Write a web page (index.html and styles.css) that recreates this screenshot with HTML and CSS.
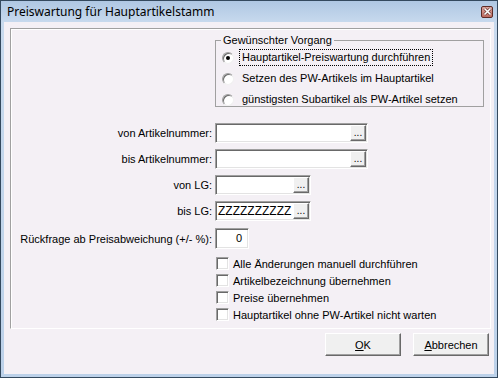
FILE: index.html
```html
<!DOCTYPE html>
<html>
<head>
    <link rel="stylesheet" href="styles.css">
</head>
<body>
    <div class="window">
        <div class="titlebar">
            <span class="title">Preiswartung für Hauptartikelstamm</span>
            <span class="close">
                <svg width="9" height="9" viewBox="0 0 9 9">
                    <path d="M1.5 1.5 L7.5 7.5 M7.5 1.5 L1.5 7.5" stroke="#6d3a34" stroke-width="3"/>
                    <path d="M1.5 1.5 L7.5 7.5 M7.5 1.5 L1.5 7.5" stroke="#ffffff" stroke-width="1.6"/>
                </svg>
            </span>
        </div>
        <div class="client">
            <div class="panel">
                <fieldset class="group">
                    <legend>Gewünschter Vorgang</legend>
                    <div class="radio-row"><span class="radio checked"></span><span class="opt focus">Hauptartikel-Preiswartung durchführen</span></div>
                    <div class="radio-row"><span class="radio"></span><span class="opt">Setzen des PW-Artikels im Hauptartikel</span></div>
                    <div class="radio-row"><span class="radio"></span><span class="opt">günstigsten Subartikel als PW-Artikel setzen</span></div>
                </fieldset>

                <div class="fields">
                    <div class="row">
                        <span class="lbl">von Artikelnummer:</span>
                        <div class="edit wide"><span class="val"></span><span class="dots">...</span></div>
                    </div>
                    <div class="row">
                        <span class="lbl">bis Artikelnummer:</span>
                        <div class="edit wide"><span class="val"></span><span class="dots">...</span></div>
                    </div>
                    <div class="row">
                        <span class="lbl">von LG:</span>
                        <div class="edit narrow"><span class="val"></span><span class="dots">...</span></div>
                    </div>
                    <div class="row">
                        <span class="lbl">bis LG:</span>
                        <div class="edit narrow"><span class="val">ZZZZZZZZZZ</span><span class="dots">...</span></div>
                    </div>
                    <div class="row row-gap">
                        <span class="lbl">Rückfrage ab Preisabweichung (+/- %):</span>
                        <div class="edit tiny"><span class="val num">0</span></div>
                    </div>
                </div>

                <div class="checks">
                    <div class="check-row"><span class="check"></span><span>Alle Änderungen manuell durchführen</span></div>
                    <div class="check-row"><span class="check"></span><span>Artikelbezeichnung übernehmen</span></div>
                    <div class="check-row"><span class="check"></span><span>Preise übernehmen</span></div>
                    <div class="check-row"><span class="check"></span><span>Hauptartikel ohne PW-Artikel nicht warten</span></div>
                </div>
            </div>

            <div class="buttons">
                <button class="btn"><u>O</u>K</button>
                <button class="btn"><u>A</u>bbrechen</button>
            </div>
        </div>
    </div>
</body>
</html>
```

FILE: styles.css
```css
/* General */
body {
    margin: 0;
    font-family: 'Liberation Sans', Arial, sans-serif;
    font-size: 11px;
    color: #000;
}

/* Window frame */
.window {
    width: 498px;
    height: 378px;
    box-sizing: border-box;
    border: 1px solid #34495e;
    background: linear-gradient(#afc7e3, #c8daee 22px, #bcd1e9);
    padding: 0 3px 3px 3px;
    display: flex;
    flex-direction: column;
}

.titlebar {
    height: 21px;
    display: flex;
    align-items: center;
    padding: 0 1px 0 3px;
}

.title {
    font-family: 'Noto Sans', sans-serif;
    font-size: 12px;
    color: #000;
}

.close {
    margin-left: auto;
    width: 12px;
    height: 12px;
    box-sizing: border-box;
    border: 1px solid #5e2c27;
    border-radius: 2px;
    background: linear-gradient(#dba59e, #bd6a60);
    display: flex;
    align-items: center;
    justify-content: center;
}

/* Client area */
.client {
    flex: 1;
    background-color: #f4f0f5;
    padding: 6px 0 0 6px;
}

.panel {
    width: 481px;
    height: 301px;
    box-sizing: border-box;
    border: 1px solid;
    border-color: #a0a0a0 #ffffff #ffffff #a0a0a0;
    box-shadow: inset 1px 1px 0 #ffffff;
}

/* Group box */
.group {
    margin: 5px 0 0 204px;
    width: 269px;
    height: 73px;
    box-sizing: border-box;
    padding: 0 0 0 5px;
    border: 1px solid #a0a0a0;
}

.group legend {
    padding: 0 2px;
    line-height: 13px;
}

.radio-row {
    display: flex;
    align-items: center;
    height: 21px;
}

.radio {
    margin-left: 1px;
    width: 12px;
    height: 12px;
    box-sizing: border-box;
    border-radius: 50%;
    border: 1px solid;
    border-color: #a0a0a0 #f0f0f0 #f0f0f0 #a0a0a0;
    box-shadow: inset 1px 1px 0 #6a6a6a;
    background-color: #ffffff;
    display: flex;
    align-items: center;
    justify-content: center;
}

.radio.checked::after {
    content: "";
    width: 4px;
    height: 4px;
    border-radius: 50%;
    background-color: #000;
}

.opt {
    margin-left: 5px;
    padding: 1px 2px;
    line-height: 13px;
    border: 1px solid transparent;
}

.opt.focus {
    border: 1px dotted #000;
}

/* Edit fields */
.fields {
    margin-top: 16px;
}

.row {
    display: flex;
    align-items: center;
    height: 20px;
    margin-bottom: 6px;
}

.row-gap {
    margin-top: 7px;
    height: 21px;
}

.lbl {
    width: 204px;
    box-sizing: border-box;
    padding-right: 3px;
    text-align: right;
}

.edit {
    height: 100%;
    box-sizing: border-box;
    border: 1px solid;
    border-color: #a0a0a0 #ffffff #ffffff #a0a0a0;
    box-shadow: inset 1px 1px 0 #696969, inset -1px -1px 0 #e3e3e3;
    background-color: #ffffff;
    padding: 1px;
    display: flex;
    justify-content: space-between;
    align-items: stretch;
}

.wide { width: 153px; }
.narrow { width: 96px; }
.tiny { width: 34px; }

.val {
    flex: 1;
    line-height: 16px;
    padding-left: 1px;
    font-size: 12px;
    overflow: hidden;
    white-space: nowrap;
}

.val.num {
    text-align: right;
    padding-right: 5px;
    font-size: 11px;
    line-height: 17px;
}

.dots {
    width: 16px;
    box-sizing: border-box;
    background-color: #f0f0f0;
    border: 1px solid;
    border-color: #ffffff #696969 #696969 #ffffff;
    box-shadow: inset -1px -1px 0 #a0a0a0;
    text-align: center;
    font-size: 10px;
    line-height: 14px;
}

/* Check boxes */
.checks {
    margin-top: 6px;
}

.check-row {
    display: flex;
    align-items: center;
    height: 17px;
}

.check {
    margin: 0 4px 0 205px;
    width: 13px;
    height: 13px;
    box-sizing: border-box;
    border: 1px solid;
    border-color: #a0a0a0 #ffffff #ffffff #a0a0a0;
    box-shadow: inset 1px 1px 0 #696969, inset -1px -1px 0 #e3e3e3;
    background-color: #ffffff;
}

/* Buttons */
.buttons {
    width: 481px;
    box-sizing: border-box;
    margin-top: 4px;
    padding-right: 2px;
    display: flex;
    justify-content: flex-end;
    gap: 12px;
}

.btn {
    width: 76px;
    height: 23px;
    padding: 0;
    font-family: 'Liberation Sans', Arial, sans-serif;
    font-size: 11px;
    color: #000;
    background-color: #f0f0f0;
    border: 1px solid;
    border-color: #ffffff #696969 #696969 #ffffff;
    box-shadow: inset -1px -1px 0 #a0a0a0;
}
```
